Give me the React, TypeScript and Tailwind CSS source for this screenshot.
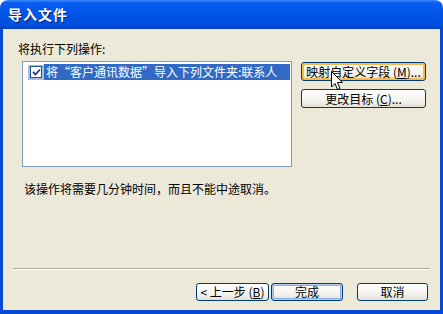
const font = "font-['SimSun','Noto_Sans_CJK_SC',sans-serif]";

function XpButton({
  children,
  className = "",
  hover = false,
  focus = false,
}: {
  children: React.ReactNode;
  className?: string;
  hover?: boolean;
  focus?: boolean;
}) {
  return (
    <div
      className={`flex items-center justify-center rounded-[3px] border border-[#003C74] bg-[linear-gradient(180deg,#ffffff_0%,#f4f3ee_60%,#e3e1d6_100%)] text-[12px] leading-none text-black ${
        hover ? "shadow-[inset_0_0_0_2px_#F9B848]" : focus ? "shadow-[inset_0_0_0_1px_#B6CDF0,inset_0_0_0_2px_#8CAEE8]" : ""
      } ${className}`}
    >
      {children}
    </div>
  );
}

export default function App() {
  return (
    <div className={`relative flex h-[314px] w-[443px] flex-col ${font}`}>
      <div className="flex h-[29px] items-center rounded-t-[8px] bg-[linear-gradient(180deg,#3D8BFF_0%,#0A5BF2_10%,#0055E6_45%,#0050DF_85%,#0741C6_100%)] pl-[8px]">
        <span className="text-[14px] font-bold tracking-[1px] text-white [text-shadow:1px_1px_0_#0A1E70]">
          导入文件
        </span>
      </div>
      <div className="flex flex-1 flex-col border-x-[3px] border-b-[4px] border-[#0848D6] bg-[#ECE9D8] pt-[13px] text-[12px] text-black">
        <div className="h-[14px] pl-[15px] leading-[14px]">将执行下列操作:</div>
        <div className="mt-[5px] flex pl-[19px]">
          <div className="h-[106px] w-[270px] border border-[#7F9DB9] bg-white pt-[2px] pl-[5px] pr-[1px]">
            <div className="flex h-[16px] items-center">
              <div className="flex h-[15px] w-[16px] items-center justify-center bg-[#A8BDE2]">
                <div className="flex h-[12px] w-[12px] items-center justify-center border border-[#1C5180] bg-white">
                  <svg width="9" height="8" viewBox="0 0 9 8">
                    <path d="M1 4 L3.5 6.5 L8 1.5" fill="none" stroke="#1A3A8C" strokeWidth="1.8" />
                  </svg>
                </div>
              </div>
              <div className="flex h-[16px] flex-1 items-center whitespace-nowrap bg-[#316AC5] pl-[2px] leading-none text-white">
                将“客户通讯数据”导入下列文件夹:联系人
              </div>
            </div>
          </div>
          <div className="ml-[9px] flex flex-col gap-[8px] pt-[1px]">
            <XpButton className="h-[19px] w-[125px]" hover>
              映射自定义字段&nbsp;(<span className="underline">M</span>)...
            </XpButton>
            <XpButton className="h-[19px] w-[125px]">
              更改目标&nbsp;(<span className="underline">C</span>)...
            </XpButton>
          </div>
        </div>
        <div className="mt-[15px] h-[14px] pl-[21px] leading-[14px]">
          该操作将需要几分钟时间，而且不能中途取消。
        </div>
        <div className="mx-[10px] mt-[72px] h-[2px] border-t border-b border-t-[#ACA899] border-b-white" />
        <div className="mt-[13px] flex justify-end pr-[12px]">
          <XpButton className="h-[18px] w-[73px]">
            &lt; 上一步&nbsp;(<span className="underline">B</span>)
          </XpButton>
          <XpButton className="ml-[2px] h-[18px] w-[72px]" focus>
            完成
          </XpButton>
          <XpButton className="ml-[14px] h-[18px] w-[71px]">取消</XpButton>
        </div>
      </div>
      <svg
        className="absolute left-[331px] top-[71px]"
        width="13"
        height="20"
        viewBox="0 0 13 20"
      >
        <path
          d="M0.5 0.5 L0.5 16 L4 12.5 L6.5 18.5 L9 17.5 L6.5 11.5 L11.5 11.5 Z"
          fill="white"
          stroke="black"
          strokeWidth="1"
          strokeLinejoin="miter"
        />
      </svg>
    </div>
  );
}
